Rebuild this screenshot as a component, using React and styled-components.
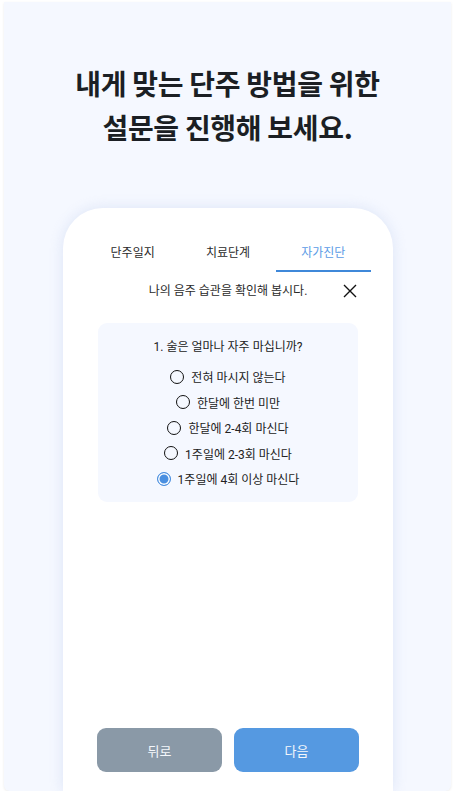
import React, { useState } from "react";
import styled, { createGlobalStyle } from "styled-components";

const Global = createGlobalStyle`
  html, body { margin: 0; padding: 0; background: #ffffff; }
  body { font-family: Roboto, "Noto Sans CJK KR", "Noto Sans", sans-serif; }
  * { box-sizing: border-box; }
`;

const Panel = styled.div`
  margin: 2px 5px 0 4px;
  height: 789px;
  background: #f5f8ff;
  border-radius: 0 0 6px 6px;
  box-shadow: 0 1px 3px rgba(0, 0, 0, 0.08);
  display: flex;
  flex-direction: column;
  align-items: center;
  overflow: hidden;
`;

const Title = styled.h1`
  margin: 59px 0 0;
  font-family: "Noto Sans CJK KR", sans-serif;
  font-size: 28px;
  line-height: 44px;
  font-weight: 700;
  color: #1b1f24;
  text-align: center;
  letter-spacing: -0.3px;
`;

const Phone = styled.div`
  margin-top: 59px;
  width: 330px;
  flex: 1;
  background: #ffffff;
  border-radius: 40px 40px 0 0;
  box-shadow: 0 0 14px rgba(190, 205, 235, 0.45);
  display: flex;
  flex-direction: column;
  padding: 28px 22px 19px;
  margin-left: 1px;
`;

const Tabs = styled.div`
  display: grid;
  grid-template-columns: repeat(3, 1fr);
`;

const Tab = styled.div`
  text-align: center;
  font-size: 12px;
  line-height: 18px;
  padding: 8px 0 8px;
  color: ${(p) => (p.$active ? "#5b9be6" : "#2a2a2a")};
  border-bottom: 2px solid ${(p) => (p.$active ? "#3f88d9" : "transparent")};
`;

const Sub = styled.div`
  position: relative;
  margin-top: 10px;
  text-align: center;
  font-size: 12px;
  line-height: 18px;
  color: #2a2a2a;
`;

const Close = styled.svg`
  position: absolute;
  right: 14px;
  top: 2px;
  width: 14px;
  height: 14px;
`;

const Question = styled.div`
  margin: 23px 13px 0;
  background: #f5f8ff;
  border-radius: 9px;
  padding: 15px 0 10px;
  display: flex;
  flex-direction: column;
  align-items: center;
`;

const QText = styled.div`
  font-size: 12px;
  line-height: 18px;
  color: #222;
  margin-bottom: 8px;
`;

const Option = styled.label`
  display: flex;
  align-items: center;
  gap: 7px;
  height: 25.5px;
  font-size: 12px;
  color: #222;
  cursor: pointer;
`;

const Radio = styled.span`
  width: 14px;
  height: 14px;
  border-radius: 50%;
  border: 1.5px solid ${(p) => (p.$checked ? "#4a8fe0" : "#111")};
  background: ${(p) => (p.$checked ? "#4a8fe0" : "transparent")};
  box-shadow: ${(p) => (p.$checked ? "inset 0 0 0 1.5px #ffffff" : "none")};
  flex: none;
`;

const Spacer = styled.div`
  flex: 1;
`;

const Buttons = styled.div`
  display: grid;
  grid-template-columns: 125px 125px;
  justify-content: center;
  gap: 12px;
`;

const Button = styled.button`
  height: 44px;
  border: none;
  border-radius: 9px;
  background: ${(p) => (p.$primary ? "#5599e1" : "#8a99a7")};
  color: #f4f7fb;
  font-family: inherit;
  font-size: 13px;
`;

const options = [
  "전혀 마시지 않는다",
  "한달에 한번 미만",
  "한달에 2-4회 마신다",
  "1주일에 2-3회 마신다",
  "1주일에 4회 이상 마신다",
];

export default function App() {
  const [sel, setSel] = useState(4);
  return (
    <>
      <Global />
      <Panel>
        <Title>
          내게 맞는 단주 방법을 위한
          <br />
          설문을 진행해 보세요.
        </Title>
        <Phone>
          <Tabs>
            <Tab>단주일지</Tab>
            <Tab>치료단계</Tab>
            <Tab $active>자가진단</Tab>
          </Tabs>
          <Sub>
            나의 음주 습관을 확인해 봅시다.
            <Close viewBox="0 0 14 14">
              <path d="M1 1 L13 13 M13 1 L1 13" stroke="#111" strokeWidth="1.4" fill="none" />
            </Close>
          </Sub>
          <Question>
            <QText>1. 술은 얼마나 자주 마십니까?</QText>
            {options.map((o, i) => (
              <Option key={o} onClick={() => setSel(i)}>
                <Radio $checked={sel === i} />
                {o}
              </Option>
            ))}
          </Question>
          <Spacer />
          <Buttons>
            <Button>뒤로</Button>
            <Button $primary>다음</Button>
          </Buttons>
        </Phone>
      </Panel>
    </>
  );
}
